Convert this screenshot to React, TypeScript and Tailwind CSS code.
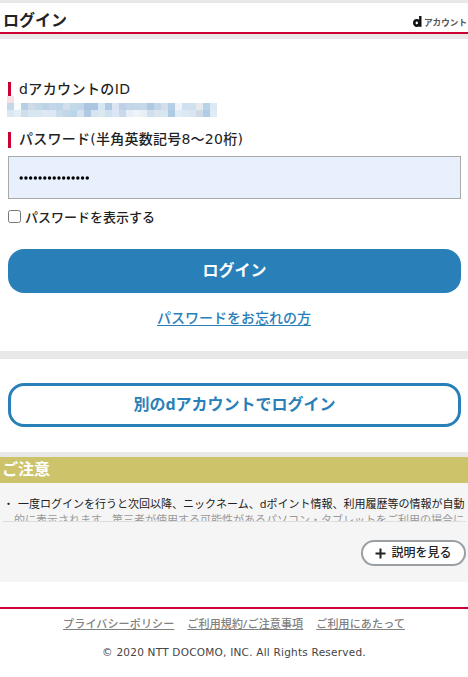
import React from "react";

const maskTop = [
  "#c3d9ea", "#f9fbfb", "#b4cfe6", "#cfdbe7", "#c3d8e8", "#bbd3e4", "#c3d7e8", "#bdd5e6", "#d3dfea", "#c2dae8",
  "#c2d6e8", "#abc5e0", "#abc6e0", "#d8e5f3", "#afcae2", "#dbe5f2", "#bdd0e6", "#c3d6e8", "#c3d7e8", "#c5d8e8",
  "#afcae0", "#c3d5e8", "#d3e0ec", "#b6cde6", "#eff3f7", "#cfe0ee", "#cfe0ee", "#e8e8ef", "#b6d4e8", "#dbe9f5",
];
const maskBottom = [
  "#dbe7f5", "#e4eef5", "#cfe0ed", "#d8e6f0", "#d8e6f0", "#dfe8f3", "#dbe8f5", "#c9dcec", "#c3d6e8", "#b9d6ea",
  "#d5e3ee", "#afcae2", "#d5e3f2", "#dbe8f0", "#cfe0ef", "#dbe5f5", "#c9d8ec", "#e8eef7", "#eff4f9", "#e9f0f5",
  "#cfe0ec", "#dbe5ef", "#d8e6ef", "#aecbe4", "#e0ebf5", "#dce8f3", "#d8e6f1", "#cfdae6", "#afcde4", "#dfebf5",
];

const footerLinks = ["プライバシーポリシー", "ご利用規約/ご注意事項", "ご利用にあたって"];

function Header() {
  return (
    <header className="border-t-[3px] border-[#e8e8e8]">
      <div className="flex h-[31px] items-center justify-between border-b-2 border-[#cc0033] pl-[3px] pr-[1px]">
        <h1 className="relative top-[2px] text-[16px] leading-none font-bold">ログイン</h1>
        <div className="flex items-center gap-[2px] pt-[8px]">
          <svg width="9" height="11" viewBox="0 0 9 11" fill="none" stroke="#111" strokeWidth="2.6">
            <ellipse cx="3.8" cy="6.9" rx="2.5" ry="2.7" />
            <path d="M7.3 0v10.8" strokeWidth="2.4" />
          </svg>
          <span className="pt-[2px] text-[8.6px] leading-[12px] font-bold whitespace-nowrap text-[#555]">アカウント</span>
        </div>
      </div>
      <div className="h-[5px] bg-[#e8e8e8]" />
    </header>
  );
}

function MaskedId() {
  return (
    <div className="ml-[7px] h-[21px] w-[210px]">
      <div className="h-[7px] w-[7px] bg-[#f8dfe5]" />
      {[maskTop, maskBottom].map((row, i) => (
        <div key={i} className="flex">
          {row.map((color, j) => (
            <div key={j} className="h-[7px] w-[7px]" style={{ backgroundColor: color }} />
          ))}
        </div>
      ))}
    </div>
  );
}

function LoginForm() {
  return (
    <section className="h-[312px] pt-[43px]">
      <div className="ml-2 flex h-[14px] items-center border-l-[3px] border-[#cc0033] pl-2 font-['DejaVu_Sans','Noto_Sans_CJK_JP',sans-serif] text-[14px] font-medium tracking-[0.4px] whitespace-nowrap">
        dアカウントのID
      </div>
      <MaskedId />
      <div className="mt-[15px] ml-2 flex h-4 items-center border-l-[3px] border-[#cc0033] pb-[1px] pl-2 font-['DejaVu_Sans','Noto_Sans_CJK_JP',sans-serif] text-[14px] font-medium tracking-[0.25px] whitespace-nowrap">
        パスワード(半角英数記号8～20桁)
      </div>
      <div className="mt-2 mr-[7px] ml-2 flex h-[43px] items-center border border-[#a9a9a9] bg-[#e8f0fe] pl-[10px]">
        <svg width="71" height="4" viewBox="0 0 71 4" fill="#000">
          {Array.from({ length: 15 }, (_, i) => (
            <circle key={i} cx={2.2 + i * 4.72} cy="2" r="1.7" />
          ))}
        </svg>
      </div>
      <label className="mt-[9px] ml-2 flex h-[18px] items-center gap-1 text-[13px] font-medium">
        <span className="relative top-[-1px] h-[13px] w-[13px] rounded-[2.5px] border border-[#767676] bg-white" />
        <span className="pt-[2px]">パスワードを表示する</span>
      </label>
      <button className="mt-[23px] ml-2 block h-11 w-[453px] rounded-[16px] bg-[#2980b9] text-[16px] font-bold text-white">
        <span className="relative top-[-1px]">ログイン</span>
      </button>
      <div className="mt-[14px] text-center text-[14px] leading-[22px] font-medium text-[#2980b9]">
        <a className="underline underline-offset-2">パスワードをお忘れの方</a>
      </div>
    </section>
  );
}

function Notice() {
  return (
    <section className="h-[125px] bg-[#f5f5f5]">
      <h2 className="h-[26px] bg-[#cdc36a] pl-[2px] text-[16px] leading-[24px] font-bold text-white">ご注意</h2>
      <div className="mr-[2px] ml-[3px] h-[39px] overflow-hidden border-b border-[#dedede] pt-[13px] text-[11px] leading-4 whitespace-nowrap">
        <p>
          <span className="inline-block w-[15px]">・</span>
          一度ログインを行うと次回以降、ニックネーム、dポイント情報、利用履歴等の情報が自動
        </p>
        <p className="pl-[11px] text-[#999]">
          的に表示されます。第三者が使用する可能性があるパソコン・タブレットをご利用の場合に
        </p>
      </div>
      <div className="mt-[18px] mr-[2px] flex justify-end">
        <button className="flex h-[26px] w-[105px] items-center justify-center gap-[5px] rounded-full border-2 border-[#999fa3] bg-white text-[12px] font-medium whitespace-nowrap">
          <svg width="11" height="11" viewBox="0 0 11 11" stroke="#222" strokeWidth="2">
            <path d="M5.5 0.5v10M0.5 5.5h10" />
          </svg>
          説明を見る
        </button>
      </div>
    </section>
  );
}

function Footer() {
  return (
    <footer className="mt-[25px] border-t-2 border-[#cc0033] pt-[6px]">
      <nav className="flex justify-center gap-[13px] text-[11px] leading-[18px] font-medium tracking-[0.15px] text-[#808080]">
        {footerLinks.map((link) => (
          <a key={link} className="whitespace-nowrap underline underline-offset-1">
            {link}
          </a>
        ))}
      </nav>
      <p className="mt-[12px] text-center font-['DejaVu_Sans'] text-[10.5px] leading-[14px] tracking-[0.23px] text-[#444]">
        © 2020 NTT DOCOMO, INC. All Rights Reserved.
      </p>
    </footer>
  );
}

export default function App() {
  return (
    <div className="h-[677px] w-[468px] overflow-hidden bg-white font-['Noto_Sans','Noto_Sans_CJK_JP',sans-serif] text-[#222]">
      <Header />
      <LoginForm />
      <div className="h-2 bg-[#e8e8e8]" />
      <div className="h-[93px] pt-6 pl-2">
        <button className="h-11 w-[453px] rounded-[16px] border-[3px] border-[#2980b9] text-[16px] font-bold text-[#2980b9]">
          <span className="relative top-[-1px]">別のdアカウントでログイン</span>
        </button>
      </div>
      <div className="h-[5px] bg-[#e8e8e8]" />
      <Notice />
      <Footer />
    </div>
  );
}
